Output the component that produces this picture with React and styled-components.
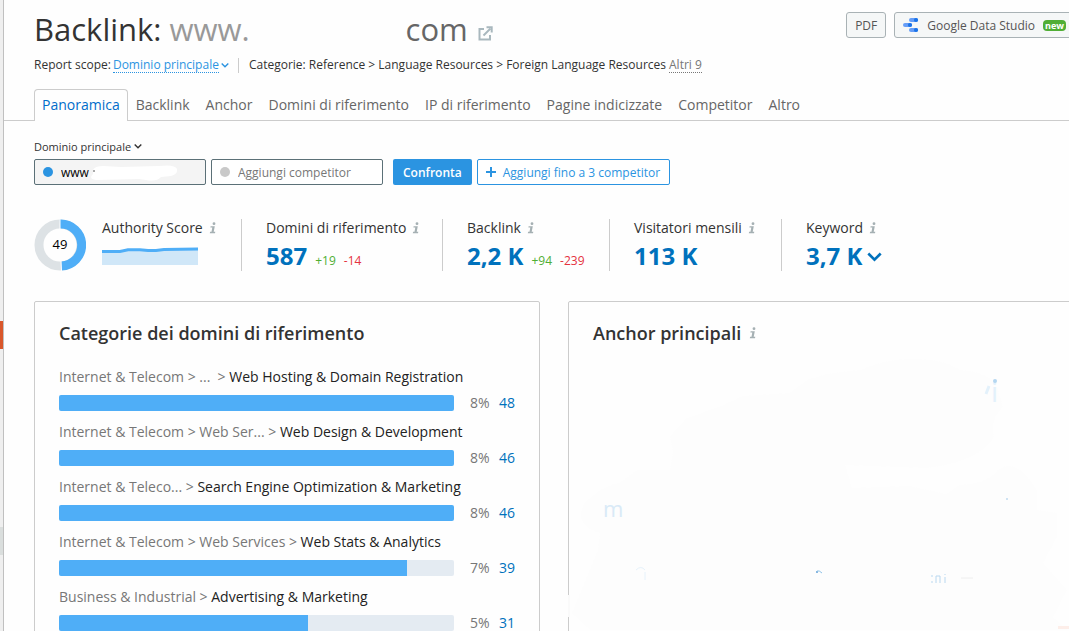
import React, { useState } from "react";
import styled, { createGlobalStyle } from "styled-components";

const tabs = [
  "Panoramica",
  "Backlink",
  "Anchor",
  "Domini di riferimento",
  "IP di riferimento",
  "Pagine indicizzate",
  "Competitor",
  "Altro",
];

const stats = [
  { id: "domains", label: "Domini di riferimento", value: "587", up: "+19", down: "-14" },
  { id: "backlinks", label: "Backlink", value: "2,2 K", up: "+94", down: "-239" },
  { id: "visitors", label: "Visitatori mensili", value: "113 K" },
  { id: "keywords", label: "Keyword", value: "3,7 K", more: true },
];

const categories = [
  { path: "Internet & Telecom > ...  > ", name: "Web Hosting & Domain Registration", bar: 100, percent: "8%", count: 48 },
  { path: "Internet & Telecom > Web Ser... > ", name: "Web Design & Development", bar: 100, percent: "8%", count: 46 },
  { path: "Internet & Teleco... > ", name: "Search Engine Optimization & Marketing", bar: 100, percent: "8%", count: 46 },
  { path: "Internet & Telecom > Web Services > ", name: "Web Stats & Analytics", bar: 88, percent: "7%", count: 39 },
  { path: "Business & Industrial > ", name: "Advertising & Marketing", bar: 63, percent: "5%", count: 31 },
];

const InfoIcon = () => (
  <InfoSvg width="8" height="12" viewBox="0 0 8 12" aria-hidden="true">
    <circle cx="5" cy="1.7" r="1.4" />
    <path d="M1.6 4.2H5.8L4.7 9.8H6.3L6 11.2H.8L1.1 9.8H2.5L3.3 5.6H1.4Z" />
  </InfoSvg>
);

const Chevron = ({ size = 8, stroke = 1.4 }) => (
  <svg width={size} height={size} viewBox="0 0 8 8" fill="none" stroke="currentColor" strokeWidth={stroke} aria-hidden="true">
    <path d="M.7 2.4 4 5.7 7.3 2.4" />
  </svg>
);

const Header = () => (
  <Head>
    <div>
      <Title>
        Backlink: <Site>www.</Site>
        <SiteEnd href="#site">
          com
          <svg width="15" height="15" viewBox="0 0 15 15" fill="none" stroke="#a9b8be" strokeWidth="2" aria-hidden="true">
            <path d="M6 3H1.5V13.5H12V9" />
            <path d="M5.5 9.5 12.5 2.5" />
            <path d="M8.5 1.3H13.7V6.5" />
          </svg>
        </SiteEnd>
      </Title>
      <Scope>
        <span>Report scope:</span>
        <ScopeButton type="button">
          <u>Dominio principale</u>
          <Chevron />
        </ScopeButton>
        <Crumbs>Categorie: Reference &gt; Language Resources &gt; Foreign Language Resources</Crumbs>
        <MoreLink href="#altri">Altri 9</MoreLink>
      </Scope>
    </div>
    <Exports>
      <ExportButton type="button">PDF</ExportButton>
      <ExportButton type="button">
        <svg width="16" height="16" viewBox="0 0 16 16" aria-hidden="true">
          <rect x="6" y="1" width="9" height="4" rx="2" fill="#669df6" />
          <rect x="0" y="6" width="9" height="4" rx="2" fill="#669df6" />
          <rect x="6" y="11" width="9" height="4" rx="2" fill="#669df6" />
          <circle cx="13" cy="3" r="2.1" fill="#1a73e8" />
          <circle cx="7" cy="8" r="2.1" fill="#1a73e8" />
          <circle cx="13" cy="13" r="2.1" fill="#1a73e8" />
        </svg>
        Google Data Studio
        <Badge>new</Badge>
      </ExportButton>
    </Exports>
  </Head>
);

const Compare = () => {
  const [domain, setDomain] = useState("www");
  const [competitor, setCompetitor] = useState("");
  return (
    <CompareBox>
      <TypeButton type="button">
        Dominio principale
        <Chevron />
      </TypeButton>
      <CompareRow>
        <Field $filled>
          <Dot color="#2b94e1" />
          <FieldInput aria-label="Dominio" value={domain} onChange={(e) => setDomain(e.target.value)} />
          <Smudge width="92" height="17" viewBox="0 0 92 17" aria-hidden="true">
            <path d="M2 5Q4 1 12 1L30 2 68 1Q84 -1 86 4 87 9 80 11L70 12Q66 17 55 15L48 14 5 15Q-3 14 2 9Z" fill="#fff" />
            <path d="M2 6H4" stroke="#555" />
          </Smudge>
        </Field>
        <Field>
          <Dot color="#c9c9c9" />
          <FieldInput
            aria-label="Competitor"
            placeholder="Aggiungi competitor"
            value={competitor}
            onChange={(e) => setCompetitor(e.target.value)}
          />
        </Field>
        <PrimaryButton type="button">Confronta</PrimaryButton>
        <OutlineButton type="button">
          <svg width="12" height="12" viewBox="0 0 12 12" stroke="currentColor" strokeWidth="2" aria-hidden="true">
            <path d="M6 1V11M1 6H11" />
          </svg>
          Aggiungi fino a 3 competitor
        </OutlineButton>
      </CompareRow>
    </CompareBox>
  );
};

const Stats = () => (
  <StatsRow>
    <Authority>
      <svg width="52" height="52" viewBox="0 0 52 52" aria-hidden="true">
        <circle cx="26" cy="26" r="21" fill="none" stroke="#dde2e5" strokeWidth="9" />
        <path d="M26 5A21 21 0 0 1 27.3 47" fill="none" stroke="#4faef7" strokeWidth="9" />
        <path d="M26 0V10M27 42 27.5 52" stroke="#fff" />
        <text x="26" y="30" textAnchor="middle" fontSize="13" fill="#000">49</text>
      </svg>
      <div>
        <StatLabel>
          Authority Score
          <InfoIcon />
        </StatLabel>
        <Spark width="96" height="20" viewBox="0 0 96 20" aria-hidden="true">
          <path d="M0 4H18L26 3H38L46 4H54L62 3 96 2V18H0Z" fill="#d0e7f8" />
          <path d="M0 4.5H18L26 2.8H38L46 3.5H54L62 2.5 96 2" fill="none" stroke="#4faef7" strokeWidth="3" />
        </Spark>
      </div>
    </Authority>
    {stats.map((s) => (
      <Stat key={s.id}>
        <StatLabel>
          {s.label}
          <InfoIcon />
        </StatLabel>
        <StatLine>
          <StatValue href={"#" + s.id}>{s.value}</StatValue>
          {s.up && <Delta color="#4fae33">{s.up}</Delta>}
          {s.down && <Delta color="#e5323e">{s.down}</Delta>}
          {s.more && (
            <MoreButton type="button" aria-label="Mostra altro">
              <Chevron size={15} />
            </MoreButton>
          )}
        </StatLine>
      </Stat>
    ))}
  </StatsRow>
);

const Categories = () => (
  <Card>
    <CardTitle>Categorie dei domini di riferimento</CardTitle>
    <List>
      {categories.map((c) => (
        <Row key={c.name}>
          <RowLabel>
            {c.path}
            <b>{c.name}</b>
          </RowLabel>
          <Track>
            <Fill style={{ width: c.bar + "%" }} />
          </Track>
          <Percent>{c.percent}</Percent>
          <Count href={"#" + c.count}>{c.count}</Count>
        </Row>
      ))}
    </List>
  </Card>
);

// word cloud, mostly blanked out
const Anchors = () => (
  <Card>
    <CardTitle>
      Anchor principali
      <InfoIcon />
    </CardTitle>
    <Cloud width="507" height="330" viewBox="-1 0 507 330" aria-hidden="true">
      <path
        d="M238 78Q260 70 291 68 320 56 344 57 375 57 391 68 420 70 428 85L434 105Q420 118 425 135 410 160 358 166L276 163 283 186 340 184 377 192 391 183Q415 182 425 172 444 150 468 188V208L488 211V235L474 261 498 288 484 315 498 328H21L3 311 29 248 31 231Q4 222 15 202 30 185 52 180L68 168H101L104 150 101 134 118 116 150 105 174 94 221 91Z"
        fill="#fdfdfd"
      />
      <text x="422" y="100" fontSize="28" fill="#e3f1fb">i</text>
      <circle cx="426" cy="79" r="2" fill="#b4d6f0" />
      <path d="M420 84 417 92" stroke="#e3f1fb" strokeWidth="3" />
      <text x="34" y="215" fontSize="22" fill="#d9eaf7">m</text>
      <path d="M67 268Q72 263 76 268M76 270V278" stroke="#e6f2fb" fill="none" />
      <path d="M247 270H249" stroke="#1273c4" />
      <path d="M248 269Q250 268 253 271" stroke="#8fc2e8" fill="none" />
      <path d="M363 273V275M363 279V281M367 281V274H371V281M376 272V273M376 275V281" stroke="#b9d8f0" fill="none" />
      <path d="M392 276H404" stroke="#eee" />
      <path d="M438 196V198" stroke="#cfe3f3" strokeWidth="2" />
      <path d="M-1 293H1V315H-1Z" fill="#fafafa" />
      <path d="M489 324H506V327H489Z" fill="#fdeee9" />
    </Cloud>
  </Card>
);

const App = () => {
  const [active, setActive] = useState("Panoramica");
  return (
    <>
      <GlobalStyle />
      <Shell>
        <Rail>
          <Marker color="#d9572b" />
          <Marker color="#dadedd" />
        </Rail>
        <Main>
          <Header />
          <Tabs>
            {tabs.map((t) => (
              <Tab key={t} type="button" $active={t === active} onClick={() => setActive(t)}>
                {t}
              </Tab>
            ))}
          </Tabs>
          <Content>
            <Compare />
            <Stats />
            <Cards>
              <Categories />
              <Anchors />
            </Cards>
          </Content>
        </Main>
      </Shell>
    </>
  );
};
export default App;

const GlobalStyle = createGlobalStyle`
* { box-sizing: border-box; }
body {
  margin: 0;
  background: #fefefe;
  color: #333;
  font-family: "Open Sans", "Noto Sans", sans-serif;
  font-size: 14px;
}
button, input { font: inherit; }
a { text-decoration: none; }
`;
const Shell = styled.div`
display: flex;
height: 100vh;
overflow: hidden;
`;
const Rail = styled.aside`
flex: none;
width: 4px;
padding-top: 321px;
background: #efefef;
border-right: 1px solid #c0c0c0;
`;
const Marker = styled.div`
height: 28px;
margin-bottom: 178px;
background: ${(props) => props.color};
`;
const Main = styled.main`
flex: 1;
min-width: 0;
overflow: hidden;
`;
const Head = styled.header`
display: flex;
justify-content: space-between;
height: 89px;
margin-right: -6px;
padding: 9px 0 0 30px;
white-space: nowrap;
`;
const Title = styled.h1`
display: flex;
align-items: baseline;
margin: 0;
font-size: 31px;
font-weight: 400;
line-height: 40px;
white-space: pre;
`;
const Site = styled.span`
width: 236px;
color: #999;
`;
const SiteEnd = styled.a`
color: #666;
svg { margin-left: 10px; }
`;
const Scope = styled.div`
display: flex;
align-items: center;
height: 16px;
margin-top: 8px;
font-size: 12px;
line-height: 16px;
`;
const ScopeButton = styled.button`
display: flex;
align-items: center;
gap: 2px;
padding: 0 9px 0 2px;
border: 0;
border-right: 1px solid #ccc;
background: none;
color: #2b94e1;
u {
  text-decoration: none;
  border-bottom: 1px dotted #2b94e1;
  line-height: 14px;
}
`;
const Crumbs = styled.span`
margin-left: 10px;
`;
const MoreLink = styled.a`
margin-left: 3px;
color: #777;
line-height: 14px;
border-bottom: 1px dotted #777;
`;
const Exports = styled.div`
display: flex;
gap: 8px;
padding-top: 3px;
`;
const ExportButton = styled.button`
display: flex;
align-items: center;
gap: 8px;
height: 26px;
padding: 0 8px;
border: 1px solid #a9b2b5;
border-radius: 3px;
background: #f5f7f7;
color: #555;
font-size: 12px;
`;
const Badge = styled.span`
padding: 0 2px;
border-radius: 4px;
background: #50ae35;
color: #fff;
font-size: 9px;
font-weight: 700;
line-height: 11px;
`;
const Tabs = styled.nav`
display: flex;
height: 32px;
padding-left: 30px;
border-bottom: 1px solid #ccc;
`;
const Tab = styled.button`
height: 32px;
padding: 0 7px 2px;
border: 1px solid ${(props) => (props.$active ? "#ccc" : "transparent")};
border-bottom: 0;
border-radius: 4px 4px 0 0;
background: ${(props) => (props.$active ? "#fefefe" : "none")};
color: ${(props) => (props.$active ? "#006dca" : "#666")};
white-space: nowrap;
`;
const Content = styled.div`
margin-right: -5px;
padding: 17px 0 0 30px;
`;
const CompareBox = styled.section`
display: flex;
flex-direction: column;
align-items: flex-start;
gap: 5px;
`;
const TypeButton = styled.button`
display: flex;
align-items: center;
gap: 3px;
height: 16px;
padding: 0;
border: 0;
background: none;
color: #333;
font-size: 11px;
`;
const CompareRow = styled.div`
display: flex;
gap: 5px;
height: 26px;
`;
const Field = styled.label`
position: relative;
display: flex;
align-items: center;
gap: 8px;
width: 172px;
padding: 0 8px;
border: 1px solid #5b7077;
border-radius: 2px;
background: ${(props) => (props.$filled ? "#f4f4f4" : "#fff")};
`;
const Dot = styled.span`
flex: none;
width: 10px;
height: 10px;
border-radius: 50%;
background: ${(props) => props.color};
`;
const FieldInput = styled.input`
width: 100%;
min-width: 0;
padding: 0;
border: 0;
outline: 0;
background: none;
color: #000;
font-size: 12px;
&::placeholder { color: #777; }
`;
const Smudge = styled.svg`
position: absolute;
left: 56px;
top: 5px;
`;
const PrimaryButton = styled.button`
margin-left: 5px;
padding: 0 10px;
border: 0;
border-radius: 2px;
background: #2b94e1;
color: #fff;
font-size: 12px;
font-weight: 600;
`;
const OutlineButton = styled.button`
display: flex;
align-items: center;
gap: 6px;
padding: 0 9px 0 7px;
border: 1px solid #2b94e1;
border-radius: 2px;
background: #fff;
color: #2b94e1;
font-size: 12px;
`;
const StatsRow = styled.section`
display: grid;
grid-template-columns: 207px 201px 167px 172px 1fr;
grid-template-rows: 52px;
margin-top: 34px;
`;
const Authority = styled.div`
display: flex;
gap: 16px;
`;
const Stat = styled.div`
padding-left: 24px;
border-left: 1px solid #ccc;
`;
const StatLabel = styled.div`
display: flex;
align-items: center;
gap: 6px;
line-height: 18px;
white-space: nowrap;
`;
const InfoSvg = styled.svg`
fill: #a5b0b3;
`;
const Spark = styled.svg`
display: block;
margin-top: 10px;
`;
const StatLine = styled.div`
display: flex;
align-items: baseline;
gap: 8px;
line-height: 38px;
`;
const StatValue = styled.a`
color: #0071bc;
font-size: 24px;
font-weight: 700;
`;
const Delta = styled.span`
color: ${(props) => props.color};
font-size: 12px;
`;
const MoreButton = styled.button`
align-self: center;
display: flex;
margin-left: -3px;
padding: 0;
border: 0;
background: none;
color: #0071bc;
`;
const Cards = styled.div`
display: grid;
grid-template-columns: 1fr 1fr;
gap: 28px;
margin-top: 30px;
`;
const Card = styled.section`
position: relative;
min-width: 0;
min-height: 360px;
padding: 18px 24px;
border: 1px solid #ccc;
border-radius: 2px;
`;
const CardTitle = styled.h2`
display: flex;
align-items: center;
gap: 8px;
margin: 0;
font-size: 18px;
font-weight: 600;
line-height: 26px;
`;
const List = styled.ul`
display: grid;
gap: 13px;
margin: 23px 0 0;
padding: 0;
list-style: none;
`;
const Row = styled.li`
display: grid;
grid-template-columns: 1fr 45px 16px;
row-gap: 10px;
align-items: center;
`;
const RowLabel = styled.div`
grid-column: 1 / -1;
color: #777;
font-size: 14px;
line-height: 16px;
white-space: pre;
b {
  color: #222;
  font-weight: 400;
}
`;
const Track = styled.div`
height: 16px;
border-radius: 2px;
background: #e4ebf2;
overflow: hidden;
`;
const Fill = styled.div`
height: 100%;
background: #4faef7;
`;
const Percent = styled.span`
padding-left: 16px;
color: #777;
line-height: 16px;
`;
const Count = styled.a`
color: #0071bc;
line-height: 16px;
`;
const Cloud = styled.svg`
position: absolute;
left: -1px;
top: 0;
`;
